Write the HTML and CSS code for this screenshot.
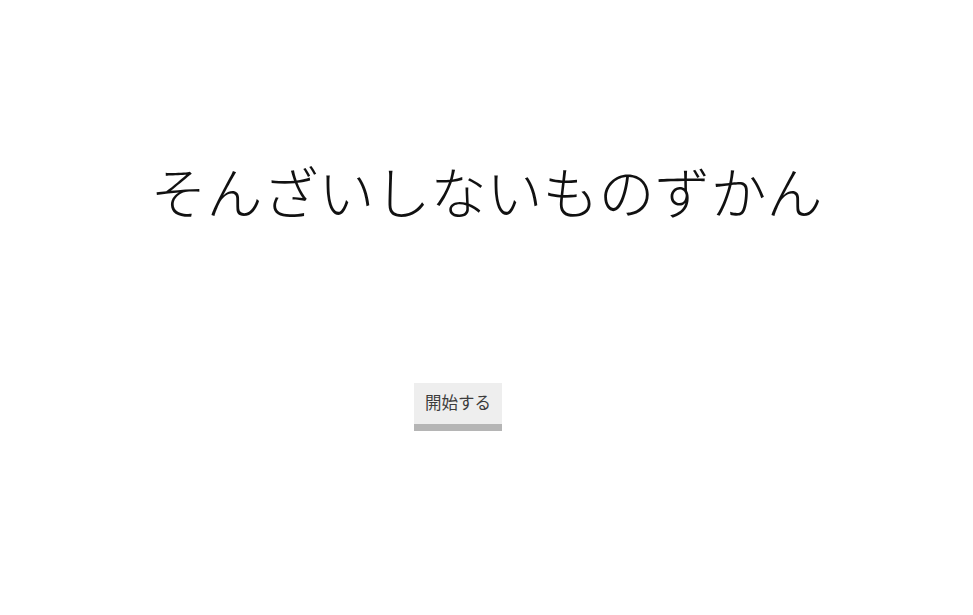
FILE: index.html
```html
<!DOCTYPE html>
<html lang="ja">
<head>
    <meta charset="UTF-8">
    <title>そんざいしないものずかん</title>
    <link rel="stylesheet" href="styles.css">
</head>
<body>
<div class="root">
    <h1 class="title">そんざいしないものずかん</h1>
    <div class="start">
        <button type="button" class="start-btn">開始する</button>
    </div>
</div>
</body>
</html>
```

FILE: styles.css
```css
* {
    box-sizing: border-box;
}

html, body {
    width: 100%;
    height: 100%;
}

body {
    margin: 0;
    padding: 0;
    background: #fff;
    color: #111;
    font-family: "Noto Sans CJK JP", "Noto Sans", sans-serif;
}

.root {
    display: flex;
    flex-direction: column;
}

.title {
    margin: 150px 0 0;
    text-align: center;
    font-size: 56px;
    font-weight: 300;
    line-height: 80px;
}

.start {
    padding: 153px 0 0 414px;
}

.start-btn {
    width: 88px;
    height: 48px;
    padding: 2px 0 5px;
    font-family: inherit;
    font-size: 16.5px;
    font-weight: 400;
    color: #3c3c3c;
    background: #eee;
    border: 0;
    border-bottom: 7px solid #b5b5b5;
    border-radius: 0;
    cursor: pointer;
}
```
